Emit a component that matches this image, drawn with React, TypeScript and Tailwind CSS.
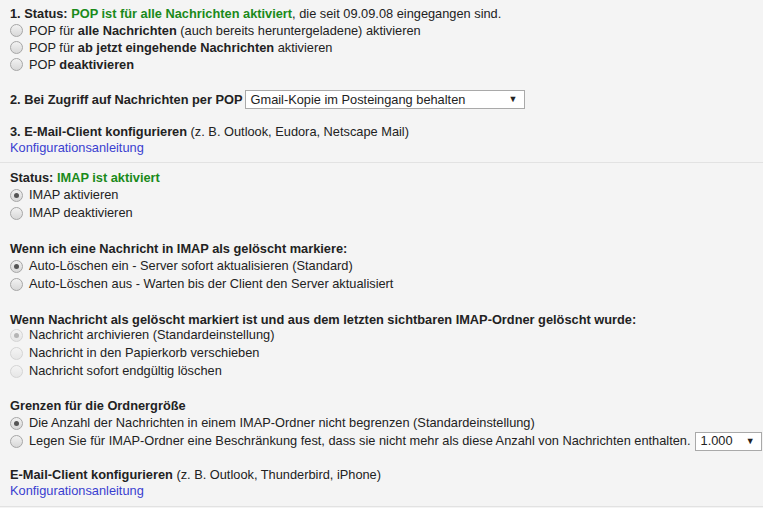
import React from 'react';

type Opt = { label: React.ReactNode; checked?: boolean; disabled?: boolean; h?: string };

const Radio = ({ checked, disabled }: { checked?: boolean; disabled?: boolean }) => (
  <span
    className={
      'inline-flex items-center justify-center w-[13px] h-[13px] rounded-full border shrink-0 ' +
      (disabled
        ? 'border-[#d4d4d4] bg-gradient-to-b from-[#f4f4f4] to-[#e6e6e6]'
        : 'border-[#a6a6a6] bg-gradient-to-b from-[#f2f2f2] to-[#d8d8d8]')
    }
  >
    {checked && (
      <span className={'w-[5px] h-[5px] rounded-full ' + (disabled ? 'bg-[#b5b5b5]' : 'bg-[#555]')} />
    )}
  </span>
);

const RadioRow = ({ label, checked, disabled, h = 'h-[18px]' }: Opt) => (
  <label className={'flex items-center gap-[6px] pl-[10px] whitespace-nowrap ' + h}>
    <Radio checked={checked} disabled={disabled} />
    <span>{label}</span>
  </label>
);

const Select = ({ value, width }: { value: string; width: string }) => (
  <span
    className={
      'inline-flex items-center justify-between h-[19px] bg-white border border-[#a9a9a9] pl-[5px] pr-[6px] shrink-0 ' +
      width
    }
  >
    <span>{value}</span>
    <span className="text-[9px] leading-none">▼</span>
  </span>
);

const Heading = ({ children, mt }: { children: React.ReactNode; mt: string }) => (
  <div className={'pl-[10px] h-[16px] leading-[16px] whitespace-nowrap ' + mt}>{children}</div>
);

const Link = ({ children }: { children: React.ReactNode }) => (
  <div className="pl-[10px] h-[16px] leading-[16px] text-[#3a3fd0]">{children}</div>
);

export default function App() {
  return (
    <div
      className="w-[763px] h-[508px] bg-[#f4f4f4] text-[12.8px] text-[#222] overflow-hidden"
      style={{ fontFamily: '"Liberation Sans", Arial, sans-serif' }}
    >
      {/* POP */}
      <div className="pt-[6px] pb-[6px] border-b border-[#e2e2e2]">
        <Heading mt="mt-0">
          <b>1. Status: </b>
          <b className="text-[#1a8a1a]">POP ist für alle Nachrichten aktiviert</b>, die seit 09.09.08 eingegangen sind.
        </Heading>
        <RadioRow h="h-[17px]" label={<>POP für <b>alle Nachrichten</b> (auch bereits heruntergeladene) aktivieren</>} />
        <RadioRow h="h-[17px]" label={<>POP für <b>ab jetzt eingehende Nachrichten</b> aktivieren</>} />
        <RadioRow h="h-[17px]" label={<>POP <b>deaktivieren</b></>} />

        <div className="flex items-center gap-[2px] pl-[10px] mt-[17px] h-[19px]">
          <b>2. Bei Zugriff auf Nachrichten per POP</b>
          <Select value="Gmail-Kopie im Posteingang behalten" width="w-[280px]" />
        </div>

        <Heading mt="mt-[15px]">
          <b>3. E-Mail-Client konfigurieren</b> (z. B. Outlook, Eudora, Netscape Mail)
        </Heading>
        <Link>Konfigurationsanleitung</Link>
      </div>

      {/* IMAP */}
      <div className="pt-[7px] pb-[7px] border-b border-[#e2e2e2]">
        <Heading mt="mt-0">
          <b>Status: </b>
          <b className="text-[#1a8a1a]">IMAP ist aktiviert</b>
        </Heading>
        <RadioRow checked label="IMAP aktivieren" />
        <RadioRow label="IMAP deaktivieren" />

        <Heading mt="mt-[19px]">
          <b>Wenn ich eine Nachricht in IMAP als gelöscht markiere:</b>
        </Heading>
        <RadioRow checked label="Auto-Löschen ein - Server sofort aktualisieren (Standard)" />
        <RadioRow label="Auto-Löschen aus - Warten bis der Client den Server aktualisiert" />

        <Heading mt="mt-[19px]">
          <b>Wenn Nachricht als gelöscht markiert ist und aus dem letzten sichtbaren IMAP-Ordner gelöscht wurde:</b>
        </Heading>
        <div className="-mt-[2px]">
          <RadioRow checked disabled label="Nachricht archivieren (Standardeinstellung)" />
          <RadioRow disabled label="Nachricht in den Papierkorb verschieben" />
          <RadioRow disabled label="Nachricht sofort endgültig löschen" />
        </div>

        <Heading mt="mt-[18px]">
          <b>Grenzen für die Ordnergröße</b>
        </Heading>
        <RadioRow checked label="Die Anzahl der Nachrichten in einem IMAP-Ordner nicht begrenzen (Standardeinstellung)" />
        <div className="flex items-center h-[18px] gap-[6px] pl-[10px] whitespace-nowrap">
          <Radio />
          <span>Legen Sie für IMAP-Ordner eine Beschränkung fest, dass sie nicht mehr als diese Anzahl von Nachrichten enthalten.</span>
          <Select value="1.000" width="w-[67px] -ml-[2px]" />
        </div>

        <Heading mt="mt-[17px]">
          <b>E-Mail-Client konfigurieren</b> (z. B. Outlook, Thunderbird, iPhone)
        </Heading>
        <Link>Konfigurationsanleitung</Link>
      </div>
    </div>
  );
}
